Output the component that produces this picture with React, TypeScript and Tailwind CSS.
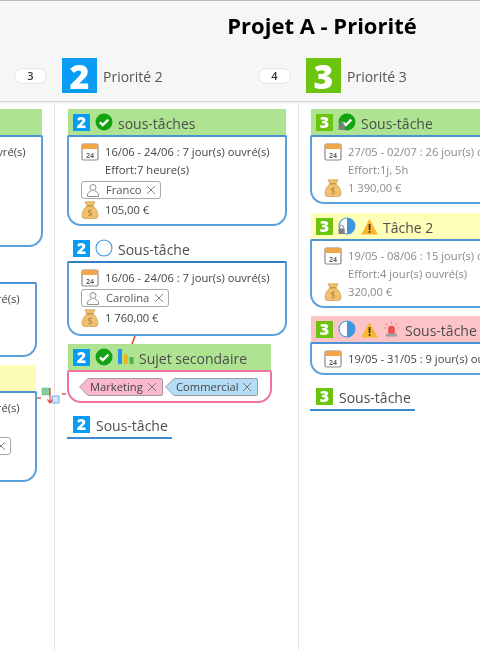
import React from "react";

const Cal = () => (
  <svg width="18" height="18" viewBox="0 0 18 18" className="shrink-0">
    <rect x="1" y="1" width="16" height="16" rx="1.5" fill="#fff" stroke="#8a8a8a" strokeWidth="1.2" />
    <path d="M1 2.500A1.500 1.500 0 0 1 2.500 1h13A1.500 1.500 0 0 1 17 2.500V6H1z" fill="#f2a64a" />
    <text x="9" y="14.500" fontSize="7" fontWeight="700" textAnchor="middle" fill="#666" fontFamily="Open Sans, sans-serif">24</text>
  </svg>
);

const Bag = () => (
  <svg width="18" height="18" viewBox="0 0 18 18" className="shrink-0">
    <path d="M4 .8h10l-2 4.200c2.800 1.800 5 6 5 9.500 0 2-1 3-3 3H4c-2 0-3-1-3-3 0-3.500 2.200-7.700 5-9.500z" fill="#efc06e" stroke="#cfa45c" strokeWidth=".8" />
    <rect x="6" y="4.200" width="6" height="1.200" fill="#b98f45" />
    <text x="9" y="14.800" fontSize="9" textAnchor="middle" fill="#a87f3a" fontFamily="Open Sans, sans-serif">$</text>
  </svg>
);

const Person = () => (
  <svg width="14" height="14" viewBox="0 0 14 14" className="shrink-0" fill="none" stroke="#8f8f8f" strokeWidth="1">
    <circle cx="7" cy="4.500" r="3" />
    <path d="M1.500 13.500v-1.500c0-2 2-3.500 3.500-4M12.500 13.500v-1.500c0-2-2-3.500-3.500-4M1.500 13.500h11" />
  </svg>
);

const X = ({ color = "#888" }: { color?: string }) => (
  <svg width="10" height="10" viewBox="0 0 10 10" className="shrink-0" fill="none" stroke={color} strokeWidth="1">
    <path d="M1 1l8 8M9 1l-8 8" />
  </svg>
);

const Lock = () => (
  <g>
    <path d="M1.800 11.500v-1.500a1.800 1.800 0 0 1 3.600 0v1.500" fill="none" stroke="#8a8a8a" strokeWidth="1" />
    <rect x="0.500" y="11.500" width="6.200" height="5.500" fill="#808080" />
  </g>
);

const Check = ({ lock }: { lock?: boolean }) => (
  <svg width="18" height="18" viewBox="0 0 18 18" className="shrink-0">
    <circle cx="9" cy="9" r="8.500" fill="#12a312" />
    <path d="M4.800 9.300l3 2.700 5.500-5.300" fill="none" stroke="#fff" strokeWidth="2.400" />
    {lock && <Lock />}
  </svg>
);

const Ring = () => (
  <svg width="18" height="18" viewBox="0 0 18 18" className="shrink-0">
    <circle cx="9" cy="9" r="8" fill="#fff" stroke="#3f97e0" strokeWidth="1.100" />
  </svg>
);

const Half = ({ lock }: { lock?: boolean }) => (
  <svg width="18" height="18" viewBox="0 0 18 18" className="shrink-0">
    <circle cx="9" cy="9" r="8" fill="#fff" stroke="#3f97e0" strokeWidth="1.100" />
    <path d="M9 1a8 8 0 0 1 0 16z" fill="#3f97e0" />
    {lock && <Lock />}
  </svg>
);

const Warn = () => (
  <svg width="17" height="17" viewBox="0 0 17 17" className="shrink-0">
    <path d="M8.500 1L16.800 16.500H.2z" fill="#f9b82e" />
    <rect x="7.700" y="6" width="1.700" height="6" fill="#333" />
    <rect x="7.700" y="13" width="1.700" height="1.800" fill="#333" />
  </svg>
);

const Siren = () => (
  <svg width="17" height="18" viewBox="0 0 18 18" className="shrink-0">
    <path d="M5.500 14V9a3.500 3.500 0 0 1 7 0v5z" fill="#ee4f4f" />
    <rect x="3" y="14" width="12" height="3" fill="#9aa0a6" />
    <path d="M9 1v2.500M3.500 3l1.600 2M14.500 3l-1.600 2M1 8h2.200M14.800 8H17" stroke="#f28a8a" strokeWidth="1.100" />
  </svg>
);

const Bars = () => (
  <svg width="16" height="18" viewBox="0 0 18 18" className="shrink-0">
    <rect x="0" y="0" width="4.500" height="17" fill="#2d95e5" />
    <rect x="6.500" y="6" width="4.500" height="11" fill="#f5b21a" />
    <rect x="13" y="9" width="4.500" height="8" fill="#4cb64c" />
  </svg>
);

const Pri = ({ n }: { n: 1 | 2 | 3 }) => (
  <span
    className={`flex h-[17px] w-[17px] shrink-0 items-center justify-center text-[16px] font-extrabold leading-none text-white ${
      n === 3 ? "bg-[#6cc40e]" : "bg-[#0a9cf5]"
    }`}
  >
    {n}
  </span>
);

const BigPri = ({ n }: { n: number }) => (
  <span
    className={`flex h-[35px] w-[35px] shrink-0 items-center justify-center text-[34px] font-extrabold leading-none text-white ${
      n === 3 ? "bg-[#6cc40e]" : "bg-[#0a9cf5]"
    }`}
  >
    {n}
  </span>
);

const Title = ({ bar, icons, text }: { bar?: string; icons: React.ReactNode; text: string }) => (
  <div className={`mx-[1px] flex h-[26px] max-w-[218px] items-center gap-[5px] overflow-visible pl-[5px] ${bar ?? ""}`}>
    {icons}
    <span className="whitespace-nowrap pt-[3px] text-[14px] leading-none text-[#4d4d4d]">{text}</span>
  </div>
);

const Row = ({ icon, children, muted }: { icon?: React.ReactNode; children: React.ReactNode; muted?: boolean }) => (
  <div className={`flex h-[18px] items-center gap-[6px] whitespace-nowrap text-[11.2px] leading-none ${muted ? "text-[#8a8a8a]" : "text-[#444]"}`}>
    <span className="flex w-[18px] shrink-0 justify-center">{icon}</span>
    <span className="block">{children}</span>
  </div>
);

const Tag = ({ name, w }: { name: string; w: string }) => (
  <div className="my-[2px] flex h-[18px] items-center">
    <div className={`flex h-[18px] items-center justify-between rounded-[3px] border border-[#a8a8a8] bg-white px-[4px] text-[11.2px] leading-none text-[#555] ${w}`}>
      <span className="flex items-center gap-[6px]">
        <Person />
        {name}
      </span>
      <X />
    </div>
  </div>
);

const Card = ({ children, heavy, bottom }: { children: React.ReactNode; heavy?: boolean; bottom?: string }) => (
  <div className={`w-[220px] rounded-b-[14px] rounded-t-[2px] border-2 border-x-[#5b9fdc] border-b-[#5b9fdc] bg-white pl-[12px] pt-[6px] ${heavy ? "border-t-[#2f7fc4]" : "border-t-[#4a93d6]"} ${bottom ?? "pb-[5px]"}`}>
    {children}
  </div>
);

const Underlined = ({ n, w }: { n: 1 | 2 | 3; w: string }) => (
  <div className={`mt-[8px] flex h-[28px] items-center gap-[6px] border-b-2 border-[#3a8ccf] pl-[6px] ${w}`}>
    <Pri n={n} />
    <span className="pt-[3px] text-[14px] leading-none text-[#4d4d4d]">Sous-tâche</span>
  </div>
);

const Pennant = ({ name, w, fill, stroke }: { name: string; w: number; fill: string; stroke: string }) => (
  <div className="relative flex h-[18px] items-center justify-between pl-[11px] pr-[6px] text-[11.2px] leading-none text-[#444]" style={{ width: w }}>
    <svg className="absolute inset-0" width={w} height="18" viewBox={`0 0 ${w} 18`}>
      <path d={`M.6 9L9 .5H${w - 2}q1.500 0 1.500 1.500v14q0 1.500-1.500 1.500H9z`} fill={fill} stroke={stroke} />
    </svg>
    <span className="relative">{name}</span>
    <span className="relative">
      <X color="#777" />
    </span>
  </div>
);

const D1 = "16/06 - 24/06 : 7 jour(s) ouvré(s)";

export default function App() {
  return (
    <div className="relative h-[650px] w-[480px] overflow-hidden bg-white font-['Open_Sans',sans-serif] blur-[0.35px]">
      <div className="ml-[-190px] flex h-full w-[1024px] flex-col">
        <header className="h-[102px] shrink-0 border-b border-t border-b-[#d6d6d6] border-t-[#bdbdbd] bg-[#f6f6f6] shadow-[0_1px_2px_rgba(0,0,0,0.08)]">
          <h1 className="flex h-[57px] items-center justify-center pb-[9px] text-[22px] font-bold leading-none text-black">Projet A - Priorité</h1>
          <div className="flex">
            {[
              ["Priorité 1", 1, "3"],
              ["Priorité 2", 2, "4"],
              ["Priorité 3", 3, "2"],
              ["Priorité 4", 4, "0"],
            ].map(([label, n, count]) => (
              <div key={label as string} className="flex h-[35px] w-[244px] items-center justify-between pl-[8px] pr-[7px]">
                <div className="flex items-center gap-[6px]">
                  <BigPri n={n as number} />
                  <span className="pt-[2px] text-[14px] font-medium leading-none text-[#555]">{label}</span>
                </div>
                <span className="flex h-[16px] w-[33px] items-center justify-center rounded-full border border-[#e4e4e4] bg-white text-[11px] font-semibold leading-none text-[#333]">
                  {count}
                </span>
              </div>
            ))}
          </div>
        </header>

        <div className="flex flex-1">
          {/* colonne 1 */}
          <div className="w-[244px] pl-[13px] pt-[7px]">
            <Title bar="bg-[#aee491]" icons={<><Pri n={1} /><Check /></>} text="Tâche 1" />
            <Card bottom="pb-[26px]">
              <Row icon={<Cal />}>{D1}</Row>
              <Row>Effort:7 heure(s)</Row>
              <Tag name="Marie" w="w-[80px]" />
              <Row icon={<Bag />}>105,00 €</Row>
            </Card>
            <div className="ml-[-6px]">
              <div className="mt-[9px]">
                <Title icons={<><Pri n={1} /><Ring /></>} text="Sous-tâche" />
              </div>
              <Card bottom="pb-[7px]">
                <Row icon={<Cal />}>{D1}</Row>
                <Tag name="Carolina" w="w-[88px]" />
                <Row icon={<Bag />}>640,00 €</Row>
              </Card>
              <div className="mt-[8px]">
                <Title bar="bg-[#fdfdb8]" icons={<><Pri n={1} /><Ring /></>} text="Tâche 3" />
              </div>
              <Card>
                <Row icon={<Cal />}>{D1}</Row>
                <Row>Effort:2 jour(s)</Row>
                <Tag name="Franco" w="w-[180px]" />
                <Row icon={<Bag />}>220,00 €</Row>
              </Card>
            </div>
          </div>

          {/* colonne 2 */}
          <div className="w-[244px] border-l border-[#e6e6e6] pl-[12px] pt-[7px]">
            <Title bar="bg-[#aee491]" icons={<><Pri n={2} /><Check /></>} text="sous-tâches" />
            <Card>
              <Row icon={<Cal />}>{D1}</Row>
              <Row>Effort:7 heure(s)</Row>
              <Tag name="Franco" w="w-[80px]" />
              <Row icon={<Bag />}>105,00 €</Row>
            </Card>
            <div className="mt-[9px]">
              <Title icons={<><Pri n={2} /><Ring /></>} text="Sous-tâche" />
            </div>
            <Card heavy bottom="pb-[7px]">
              <Row icon={<Cal />}>{D1}</Row>
              <Tag name="Carolina" w="w-[88px]" />
              <Row icon={<Bag />}>1 760,00 €</Row>
            </Card>
            <div className="mt-[8px] w-[205px]">
              <Title bar="bg-[#aee491]" icons={<><Pri n={2} /><Check /><Bars /></>} text="Sujet secondaire" />
              <div className="flex h-[33px] w-[205px] items-center gap-[2px] rounded-b-[14px] rounded-t-[2px] border-2 border-[#f272a0] bg-white pl-[10px]">
                <Pennant name="Marketing" w={84} fill="#f9b8cf" stroke="#9a9a9a" />
                <Pennant name="Commercial" w={93} fill="#b5dcf7" stroke="#9a9a9a" />
              </div>
            </div>
            <Underlined n={2} w="w-[105px]" />
          </div>

          {/* colonne 3 */}
          <div className="w-[244px] border-l border-[#e6e6e6] pl-[11px] pt-[7px]">
            <Title bar="bg-[#aee491]" icons={<><Pri n={3} /><Check lock /></>} text="Sous-tâche" />
            <Card>
              <Row muted icon={<Cal />}>27/05 - 02/07 : 26 jour(s) ouvré(s)</Row>
              <Row muted>Effort:1j, 5h</Row>
              <Row muted icon={<Bag />}>1 390,00 €</Row>
            </Card>
            <div className="mt-[9px]">
              <Title bar="bg-[#ffffb8]" icons={<><Pri n={3} /><Half lock /><Warn /></>} text="Tâche 2" />
            </div>
            <Card>
              <Row muted icon={<Cal />}>19/05 - 08/06 : 15 jour(s) ouvré(s)</Row>
              <Row muted>Effort:4 jour(s) ouvré(s)</Row>
              <Row muted icon={<Bag />}>320,00 €</Row>
            </Card>
            <div className="mt-[8px]">
              <Title bar="bg-[#fdc4c8]" icons={<><Pri n={3} /><Half /><Warn /><Siren /></>} text="Sous-tâche" />
            </div>
            <Card>
              <Row icon={<Cal />}>19/05 - 31/05 : 9 jour(s) ouvré(s)</Row>
            </Card>
            <Underlined n={3} w="w-[105px]" />
          </div>

          <div className="flex-1 border-l border-[#e6e6e6]" />
        </div>
      </div>

      {/* liens entre les tâches */}
      <svg className="pointer-events-none absolute left-0 top-0" width="480" height="650" viewBox="0 0 480 650">
        <path d="M135 336l-3 8" stroke="#d8482a" strokeWidth="1.500" fill="none" />
        <path d="M37 398h4M62 394h4" stroke="#e0603a" strokeWidth="1.500" fill="none" />
        <rect x="42" y="388" width="8" height="7" fill="#7fcf9a" stroke="#5cb87c" strokeWidth=".5" />
        <rect x="52" y="396" width="7" height="7" fill="#cfe6fa" stroke="#5ba4e0" strokeWidth=".8" />
        <path d="M50 388v14M47.500 399.500L50 403l2.500-3.500" stroke="#d33" strokeWidth="1.100" fill="none" />
      </svg>
    </div>
  );
}
